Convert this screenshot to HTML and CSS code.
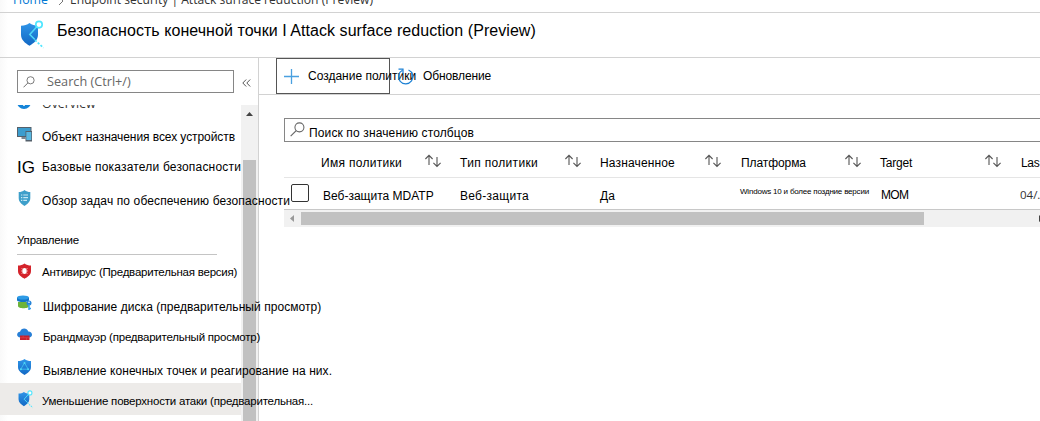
FILE: index.html
```html
<!DOCTYPE html>
<html lang="ru">
<head>
<meta charset="utf-8">
<title>Attack surface reduction</title>
<link rel="stylesheet" href="styles.css">
</head>
<body>
<svg class="defs" aria-hidden="true">
  <defs>
    <linearGradient id="blue" x1="0" y1="0" x2="0" y2="1"><stop offset="0" stop-color="#2f95e8"/><stop offset="1" stop-color="#1268c4"/></linearGradient>
    <symbol id="sort" viewBox="0 0 18 14"><path d="M5 11V1.500M1.400 5L5 1.400 8.600 5M13 3v9.500M9.400 8.900l3.600 3.600 3.600-3.600" fill="none" stroke="#555" stroke-width="1.100"/></symbol>
    <symbol id="glass" viewBox="0 0 14 14"><circle cx="8.800" cy="5" r="4.200" fill="none" stroke="#666" stroke-width="1"/><path d="M5.800 8L.6 13.200" stroke="#666" stroke-width="1.100"/></symbol>
    <symbol id="surface" viewBox="0 0 26 30"><path d="M10.500 3c2.500 2 5 2.600 8.500 2.700v9c0 5-4 8.300-8.500 11C6 23 2 19.700 2 14.700v-9C5.500 5.600 8 5 10.500 3z" fill="url(#blue)"/><path d="M18 6.500L10.800 14.500l5 5" fill="none" stroke="#50d8f5" stroke-width="1.500"/><path d="M16 20l8.500 8" stroke="#50e6ff" stroke-width="1.700" stroke-dasharray="2.200 1.600"/><circle cx="20" cy="4.600" r="3.200" fill="#fff" stroke="#50e6ff" stroke-width="1.700"/></symbol>
  </defs>
</svg>
<div class="crumbs"><a class="home">Home</a><svg class="chev" viewBox="0 0 6 10"><path d="M1 1l4 4-4 4" fill="none" stroke="#777"/></svg><span>Endpoint security | Attack surface reduction (Preview)</span></div>
<header class="header">
  <svg class="header-icon"><use href="#surface"/></svg>
  <h1 class="title">Безопасность конечной точки I Attack surface reduction (Preview)</h1>
</header>
<div class="body">
  <aside class="sidebar">
    <div class="search-row">
      <div class="search"><svg class="glass"><use href="#glass"/></svg><span>Search (Ctrl+/)</span></div>
      <svg class="collapse" viewBox="0 0 9 8"><path d="M4.200.5L.8 4l3.400 3.500M8.200.5L4.800 4l3.400 3.500" fill="none" stroke="#555"/></svg>
    </div>
    <div class="nav-area">
      <nav class="nav">
        <div class="item overview"><svg class="icon" viewBox="0 0 16 16"><circle cx="7" cy="8" r="7" fill="#1484d8"/><path d="M7 7v5" stroke="#fff" stroke-width="1.500"/></svg><span class="label">Overview</span></div>
        <div class="item low3"><svg class="icon" viewBox="0 0 16 16"><path d="M0 1h14.500v10H0z" fill="#55606b"/><path d="M1 2h12.500v8H1z" fill="#3c9dce"/><path d="M4.500 11h4v2h-4z" fill="#7c8790"/><path d="M8.500 5H15v10.500H8.500z" fill="#55606b"/><path d="M9.300 6h5v8h-5z" fill="#5ab8e0"/></svg><span class="label t-devices">Объект назначения всех устройств</span></div>
        <div class="item low1"><span class="icon mark">IG</span><span class="label t-base">Базовые показатели безопасности</span></div>
        <div class="item low3"><svg class="icon" viewBox="0 0 16 16"><path d="M7.500 0c1.800 1.600 3.600 2 5.800 2v6c0 4-3 6-5.800 8-2.800-2-5.800-4-5.800-8V2c2.200 0 4-.4 5.800-2z" fill="#3e9fca"/><path d="M4 5h1.300M4 7.700h1.300M4 10.400h1.300M6.300 5H11M6.300 7.700H11M6.300 10.400H10" stroke="#c7e8f5" stroke-width="1.200"/></svg><span class="label t-tasks">Обзор задач по обеспечению безопасности</span></div>
        <div class="group"><span>Управление</span></div>
        <div class="item low1"><svg class="icon" viewBox="0 0 16 16"><path d="M7.500.5C9.500 2 11.500 2.600 14 2.600V8c0 4-3.500 6-6.500 7.800C4.500 14 1 12 1 8V2.600C3.500 2.600 5.500 2 7.500.5z" fill="#d4232b"/><path d="M4.500 5l6 6M10.500 5l-6 6M4 8h7" stroke="#f4b5b5" stroke-width=".8"/><ellipse cx="7.500" cy="8" rx="2.100" ry="3" fill="#fff"/></svg><span class="label t-av">Антивирус (Предварительная версия)</span></div>
        <div class="item low4 shift"><svg class="icon" viewBox="0 0 16 16"><path d="M1 7v4c0 3 11 3 11 0V7z" fill="#6db33a"/><path d="M0 2.500v2.500c0 2.700 12 2.700 12 0V2.500z" fill="#1275c8"/><ellipse cx="6" cy="2.500" rx="6" ry="2" fill="#2e9be6"/><circle cx="12" cy="8" r="2.500" fill="#2684d8"/><path d="M12 9v6M12 13.500h2" stroke="#35a0ec" stroke-width="1.500"/><circle cx="12" cy="7.300" r=".8" fill="#fff"/></svg><span class="label t-disk">Шифрование диска (предварительный просмотр)</span></div>
        <div class="item low2 shift"><svg class="icon" viewBox="0 0 16 16"><path d="M3.500 10.500C-1 10.500-.8 5 3 4.800 4 .500 10 .200 11.300 4.500 16.300 4.600 16 10.500 12 10.500z" fill="#287fd6"/><path d="M3 8.500h9.500V13H3z" fill="#c8202c"/><path d="M3 10.700h9.500M6.200 8.500v2.200M9.500 10.700V13" stroke="#dd4850" stroke-width=".6"/></svg><span class="label t-fw">Брандмауэр (предварительный просмотр)</span></div>
        <div class="item low4 shift"><svg class="icon" viewBox="0 0 16 16"><path d="M7.500 0C9.500 1.500 11.500 2 14 2v6c0 4-3.500 6-6.500 8C4.500 14 1 12 1 8V2c2.500 0 4.500-.5 6.500-2z" fill="url(#blue)"/><path d="M7.500 3.800L3.800 10.200h7.400z" fill="none" stroke="#43c7f3" stroke-width=".8"/><circle cx="7.500" cy="3.900" r="1" fill="#50d8f5"/><circle cx="3.900" cy="10.200" r="1" fill="#50d8f5"/><circle cx="11.100" cy="10.200" r="1" fill="#50d8f5"/></svg><span class="label t-edr">Выявление конечных точек и реагирование на них.</span></div>
        <div class="item low2 selected"><svg class="icon"><use href="#surface"/></svg><span class="label t-asr">Уменьшение поверхности атаки (предварительная...</span></div>
      </nav>
      <div class="vscroll"><svg class="up" viewBox="0 0 7 4"><path d="M0 4L3.500 0 7 4z" fill="#444"/></svg><div class="vthumb"></div></div>
    </div>
  </aside>
  <main class="main">
    <div class="toolbar">
      <div class="create"><svg class="plus" viewBox="0 0 15 15"><path d="M7.500 0v15M0 7.500h15" stroke="#4aa0e0" stroke-width="1.300"/></svg><span>Создание политики</span></div>
      <div class="refresh"><svg class="reload" viewBox="0 0 17 17"><path d="M5.500 2.200A7.200 7.200 0 1 0 11.500 2" fill="none" stroke="#1b80d4" stroke-width="1.200"/><path d="M1.500 1.200h4.500v4.500" fill="none" stroke="#1b80d4" stroke-width="1.200"/></svg><span>Обновление</span></div>
    </div>
    <div class="filter"><svg class="filter-glass"><use href="#glass"/></svg><span>Поиск по значению столбцов</span></div>
    <div class="table">
      <div class="row head">
        <span></span>
        <div class="cell h-name"><span>Имя политики</span><svg class="sort"><use href="#sort"/></svg></div>
        <div class="cell h-type"><span>Тип политики</span><svg class="sort"><use href="#sort"/></svg></div>
        <div class="cell h-assigned"><span>Назначенное</span><svg class="sort"><use href="#sort"/></svg></div>
        <div class="cell h-platform"><span>Платформа</span><svg class="sort"><use href="#sort"/></svg></div>
        <div class="cell h-target"><span>Target</span><svg class="sort"><use href="#sort"/></svg></div>
        <div class="cell h-last"><span>Las</span></div>
      </div>
      <div class="row data">
        <span class="check"></span>
        <div class="cell d-name">Веб-защита MDATP</div>
        <div class="cell d-type">Веб-защита</div>
        <div class="cell d-assigned">Да</div>
        <div class="cell d-platform">Windows 10 и более поздние версии</div>
        <div class="cell d-target">MOM</div>
        <div class="cell d-last">04/.</div>
      </div>
      <div class="hscroll"><svg class="left" viewBox="0 0 4 7"><path d="M4 0L0 3.500 4 7z" fill="#999"/></svg><div class="hthumb"></div><svg class="right" viewBox="0 0 4 7"><path d="M0 0l4 3.500L0 7z" fill="#444"/></svg></div>
    </div>
  </main>
</div>
</body>
</html>
```
FILE: styles.css
```css
* { box-sizing: border-box; }
body { margin: 0; height: 421px; overflow: hidden; display: flex; flex-direction: column; background: linear-gradient(90deg, #f9f9f9, #fff 8px) #fff; color: #000; font: 12px/16px "Liberation Sans", Arial, sans-serif; white-space: nowrap; }
svg { display: block; flex: none; overflow: visible; }
.defs { width: 0; height: 0; flex: none; }
.crumbs { flex: none; height: 13px; border-bottom: 1px solid #d2d2d2; padding-left: 13px; display: flex; align-items: flex-end; overflow: hidden; font: 12.1px/16px "Open Sans", sans-serif; color: #333; padding-bottom: 4px; }
.home { width: 35px; color: #0078d4; font-size: 12.4px; }
.chev { width: 6px; height: 10px; margin: 0 8px 2px 10px; }
.crumbs span { margin-left: -2px; }
.header { flex: none; height: 45px; border-bottom: 1px solid #d2d2d2; display: flex; padding: 7px 0 0 19px; }
.header-icon { width: 26px; height: 30px; }
.title { margin: 1px 0 0 12px; font-size: 16px; line-height: 20px; font-weight: 400; letter-spacing: .055px; }
.body { flex: 1; min-height: 0; display: flex; }
.sidebar { width: 259px; flex: none; border-right: 1px solid #d2d2d2; display: flex; flex-direction: column; padding-top: 12px; position: relative; z-index: 1; }
.search-row { display: flex; align-items: center; padding-left: 17px; height: 23px; margin-bottom: 12px; }
.search { width: 217px; height: 23px; border: 1px solid #868686; display: flex; align-items: center; padding-left: 5px; font: 12.7px/16px "Open Sans", sans-serif; color: #666; background: #fff; }
.search span { padding-bottom: 1px; }
.glass { width: 12px; height: 12px; margin-right: 12px; }
.collapse { width: 9px; height: 8px; margin: 3px 0 0 8px; }
.nav-area { flex: 1; min-height: 0; display: flex; }
.nav { width: 241px; height: 316px; flex: none; clip-path: inset(0 -200px 0 0); position: relative; z-index: 1; }
.item { height: 32px; padding-left: 17px; display: flex; align-items: center; }
.icon { width: 16px; height: 16px; flex: none; margin-right: 9px; }
.mark { font-size: 17px; line-height: 20px; }
.low1 .label { padding-top: 2px; }
.low2 .label { padding-top: 4px; }
.low3 .label { padding-top: 6px; }
.low4 .label { padding-top: 8px; }
.shift .label { margin-left: 1px; }
.overview { margin-top: -19px; font: 12.4px/16px "Open Sans", sans-serif; color: #333; }
.overview .label { padding-top: 4px; }
.selected { background: #edebe9; }
.selected .icon { width: 17px; height: 19px; margin-right: 8px; }
.group { height: 41px; padding: 18px 0 0 17px; font-size: 11.5px; letter-spacing: -.19px; }
.group span { display: block; width: 200px; height: 23px; border-bottom: 1px solid #c4c4c4; }
.t-devices { letter-spacing: -.07px; }
.t-base { letter-spacing: .19px; }
.t-tasks { letter-spacing: .13px; }
.t-av { font-size: 11.5px; letter-spacing: -.22px; }
.t-disk { letter-spacing: .05px; }
.t-fw { font-size: 11.5px; letter-spacing: -.23px; }
.t-edr { letter-spacing: .08px; }
.t-asr { font-size: 11.5px; letter-spacing: -.21px; }
.vscroll { width: 17px; background: #f1f1f1; display: flex; flex-direction: column; align-items: center; padding-top: 7px; }
.up { width: 7px; height: 4px; }
.vthumb { width: 13px; flex: 1; margin-top: 44px; background: #c1c1c1; }
.main { flex: 1; min-width: 0; overflow: hidden; }
.toolbar { height: 37px; border-bottom: 1px solid #d2d2d2; padding-left: 17px; display: flex; }
.create { width: 114px; height: 36px; border: 1px solid #555; display: flex; align-items: center; padding-left: 7px; }
.plus { width: 15px; height: 15px; margin-right: 9px; }
.refresh { display: flex; align-items: center; padding-left: 7px; letter-spacing: -.12px; }
.reload { width: 17px; height: 17px; margin-right: 9px; }
.filter { height: 24px; margin: 23px 0 0 25px; border: 1px solid #868686; border-right: 0; padding: 3px 0 0 5px; display: flex; letter-spacing: .13px; }
.filter span { padding: 3px 0 0 4px; }
.filter-glass { width: 15px; height: 15px; }
.table { margin-left: 25px; }
.row { display: grid; grid-template-columns: 36px 140px 140px 140px 140px 140px 60px; border-bottom: 1px solid #e5e5e5; }
.head { height: 36px; }
.data { height: 32px; border-color: #c8c8c8; }
.cell { display: flex; padding: 13px 0 0 1px; }
.head .cell { justify-content: space-between; padding-right: 18px; }
.data .cell { padding-top: 10px; }
.sort { width: 18px; height: 14px; margin-top: -1px; }
.h-name { letter-spacing: .3px; }
.head .h-type { letter-spacing: .33px; padding-left: 0; }
.head .h-assigned { letter-spacing: .15px; padding-left: 0; }
.h-platform { letter-spacing: -.08px; }
.head .h-target { letter-spacing: -.2px; padding-left: 0; }
.head .h-last { letter-spacing: -.3px; }
.check { width: 18px; height: 18px; margin: 6px 0 0 7px; border: 1px solid #333; border-radius: 2px; background: #fff; }
.data .d-name { padding-left: 3px; }
.data .d-type { padding-left: 0; letter-spacing: .28px; }
.data .d-assigned { padding-left: 0; }
.data .d-platform { padding: 8px 0 0; font-size: 8px; line-height: 12px; letter-spacing: -.2px; }
.data .d-target { padding: 9px 0 0 1px; letter-spacing: -.7px; }
.data .d-last { padding: 9px 0 0; font-family: "Open Sans", sans-serif; font-size: 11.5px; color: #333; }
.hscroll { height: 17px; background: #f1f1f1; display: flex; align-items: center; padding-left: 6px; }
.left, .right { width: 4px; height: 7px; }
.hthumb { flex: none; width: 623px; height: 13px; margin: 0 115px 0 7px; background: #c1c1c1; }
```
